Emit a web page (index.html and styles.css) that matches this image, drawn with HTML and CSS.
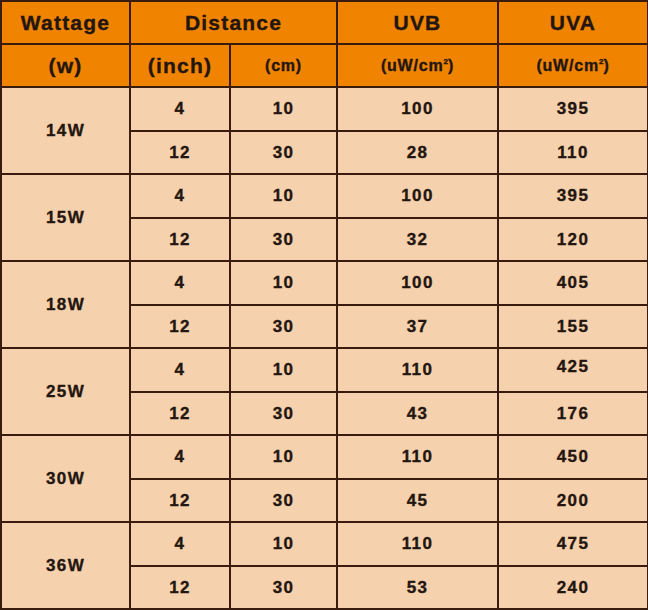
FILE: index.html
```html
<!DOCTYPE html>
<html>
<head>
<meta charset="utf-8">
<link rel="stylesheet" href="styles.css">
</head>
<body>
<table class="uv">
  <colgroup>
    <col class="c-watt"><col class="c-inch"><col class="c-cm"><col class="c-uvb"><col class="c-uva">
  </colgroup>
  <thead>
    <tr class="h1">
      <th>Wattage</th>
      <th colspan="2">Distance</th>
      <th>UVB</th>
      <th>UVA</th>
    </tr>
    <tr class="h2">
      <th>(w)</th>
      <th>(inch)</th>
      <th class="small">(cm)</th>
      <th class="small">(uW/cm<sup>2</sup>)</th>
      <th class="small">(uW/cm<sup>2</sup>)</th>
    </tr>
  </thead>
  <tbody>
    <tr class="ra"><td rowspan="2">14W</td><td>4</td><td>10</td><td>100</td><td>395</td></tr>
    <tr class="rb"><td>12</td><td>30</td><td>28</td><td>110</td></tr>
    <tr class="ra"><td rowspan="2">15W</td><td>4</td><td>10</td><td>100</td><td>395</td></tr>
    <tr class="rb"><td>12</td><td>30</td><td>32</td><td>120</td></tr>
    <tr class="ra"><td rowspan="2">18W</td><td>4</td><td>10</td><td>100</td><td>405</td></tr>
    <tr class="rb"><td>12</td><td>30</td><td>37</td><td>155</td></tr>
    <tr class="ra"><td rowspan="2">25W</td><td>4</td><td>10</td><td>110</td><td><span class="raised">425</span></td></tr>
    <tr class="rb"><td>12</td><td>30</td><td>43</td><td>176</td></tr>
    <tr class="ra"><td rowspan="2">30W</td><td>4</td><td>10</td><td>110</td><td>450</td></tr>
    <tr class="rb"><td>12</td><td>30</td><td>45</td><td>200</td></tr>
    <tr class="ra"><td rowspan="2">36W</td><td>4</td><td>10</td><td>110</td><td>475</td></tr>
    <tr class="rb"><td>12</td><td>30</td><td>53</td><td>240</td></tr>
  </tbody>
</table>
</body>
</html>
```

FILE: styles.css
```css
html, body {
  margin: 0;
  padding: 0;
  background: #ffffff;
}

.uv {
  width: 647px;
  border-collapse: collapse;
  table-layout: fixed;
  font-family: "Liberation Sans", Arial, sans-serif;
  font-weight: bold;
  color: #231610;
  -webkit-text-stroke: 0.35px #231610;
}

.c-watt { width: 129px; }
.c-inch { width: 100px; }
.c-cm { width: 107px; }
.c-uvb { width: 161px; }
.c-uva { width: 150px; }

.uv th,
.uv td {
  border: 2px solid #3a1c0e;
  text-align: center;
  vertical-align: middle;
  padding: 0;
}

.uv th {
  background: #f08300;
  font-size: 21px;
  letter-spacing: 1.2px;
}

.uv th.small {
  font-size: 16px;
  letter-spacing: 0.8px;
}

.uv sup {
  font-size: 8px;
  letter-spacing: 0;
  vertical-align: 7px;
  line-height: 0;
}

.h1 th { height: 41px; }
.h2 th { height: 41px; }

.uv td {
  background: #f6d1ad;
  font-size: 17px;
  letter-spacing: 1.4px;
}

.ra td { height: 42px; }
.rb td { height: 41px; }

.raised {
  display: inline-block;
  margin-bottom: 6px;
}
```
